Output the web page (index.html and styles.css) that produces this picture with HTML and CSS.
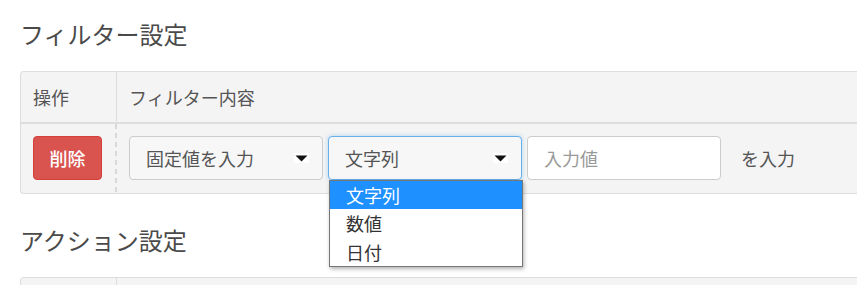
FILE: index.html
```html
<!DOCTYPE html>
<html lang="ja">
<head>
<meta charset="utf-8">
<title>フィルター設定</title>
<link rel="stylesheet" href="styles.css">
</head>
<body>
<div class="page">
  <section class="section">
    <h2 class="title">フィルター設定</h2>
    <div class="table">
      <div class="row head">
        <div class="cell c1">操作</div>
        <div class="cell c2">フィルター内容</div>
      </div>
      <div class="row body">
        <div class="cell c1"><button class="btn-del">削除</button></div>
        <div class="cell c2">
          <div class="controls">
            <div class="select">
              <span class="sel-text">固定値を入力</span>
              <svg class="caret" width="15" height="10" viewBox="0 0 15 10"><rect width="15" height="10" fill="#fff"/><polygon points="1.5,2.5 13.5,2.5 7.5,8.5" fill="#111"/></svg>
            </div>
            <div class="select-wrap">
              <div class="select focused">
                <span class="sel-text">文字列</span>
                <svg class="caret" width="15" height="10" viewBox="0 0 15 10"><rect width="15" height="10" fill="#fff"/><polygon points="1.5,2.5 13.5,2.5 7.5,8.5" fill="#111"/></svg>
              </div>
              <ul class="dropdown">
                <li class="opt active">文字列</li>
                <li class="opt">数値</li>
                <li class="opt">日付</li>
              </ul>
            </div>
            <div class="input"><span class="placeholder">入力値</span></div>
            <span class="suffix">を入力</span>
          </div>
        </div>
      </div>
    </div>
  </section>
  <section class="section second">
    <h2 class="title">アクション設定</h2>
    <div class="table">
      <div class="row head">
        <div class="cell c1"></div>
        <div class="cell c2"></div>
      </div>
    </div>
  </section>
</div>
</body>
</html>
```
FILE: styles.css
```css
html, body {
  margin: 0;
  padding: 0;
  overflow: hidden;
  background: #fff;
}
body {
  font-family: "Noto Sans CJK JP", "Noto Sans", sans-serif;
  color: #555;
  width: 857px;
  height: 285px;
}
.page {
  padding: 20px 0 0 20px;
  height: 265px;
  overflow: hidden;
}
.section {
  margin: 0;
}
.second {
  margin-top: 32px;
}
.title {
  margin: 0 0 22px 0;
  font-size: 24px;
  font-weight: 400;
  line-height: 28.8px;
  color: #4a4a4a;
}
.table {
  border: 1px solid #ddd;
  border-right: 0;
  border-radius: 4px 0 0 4px;
  background: #f4f4f4;
}
.row {
  display: flex;
}
.head {
  height: 50px;
  border-bottom: 2px solid #ddd;
}
.head .cell {
  display: flex;
  align-items: center;
  padding: 0 12px;
  font-size: 18px;
  color: #555;
}
.c1 {
  width: 96px;
  box-sizing: border-box;
  border-right: 1px solid #ddd;
  flex: none;
}
.c2 {
  flex: 1;
}
.body .cell {
  padding: 12px 12px 13px 12px;
  display: flex;
  align-items: center;
}
.body .c1 {
  border-right: 0;
  padding-right: 13px;
  background: repeating-linear-gradient(to bottom, #d9d9d9 0 5px, transparent 5px 9px) right top / 2px 100% no-repeat;
}
.btn-del {
  width: 69px;
  height: 44px;
  margin: 0;
  border: 1px solid #d43f3a;
  border-radius: 4px;
  background: #d9534f;
  color: #fff;
  font-family: inherit;
  font-size: 18px;
  font-weight: 500;
  padding: 0;
}
.controls {
  display: flex;
  align-items: center;
  gap: 5px;
}
.select, .input {
  width: 194px;
  height: 44px;
  box-sizing: border-box;
  border: 1px solid #ccc;
  border-radius: 4px;
  display: flex;
  align-items: center;
  justify-content: space-between;
  padding: 0 13px 0 16px;
  font-size: 18px;
}
.select {
  background: #f7f7f7;
  color: #555;
}
.select.focused {
  border-color: #66afe9;
  box-shadow: 0 0 4px rgba(102, 175, 233, 0.5);
}
.caret {
  display: block;
  flex: none;
}
.select-wrap {
  position: relative;
}
.input {
  background: #fff;
}
.placeholder {
  color: #999;
}
.suffix {
  margin-left: 15px;
  font-size: 18px;
  color: #555;
}
.dropdown {
  position: absolute;
  top: 44px;
  left: 1px;
  width: 194px;
  box-sizing: border-box;
  margin: 0;
  padding: 0;
  list-style: none;
  background: #fff;
  border: 1px solid #767676;
  box-shadow: 1px 2px 4px rgba(0, 0, 0, 0.3);
  z-index: 5;
}
.opt {
  height: 28.5px;
  line-height: 28.5px;
  padding-left: 16px;
  font-size: 18px;
  color: #333;
}
.opt.active {
  background: #1e90ff;
  color: #fff;
}
```
